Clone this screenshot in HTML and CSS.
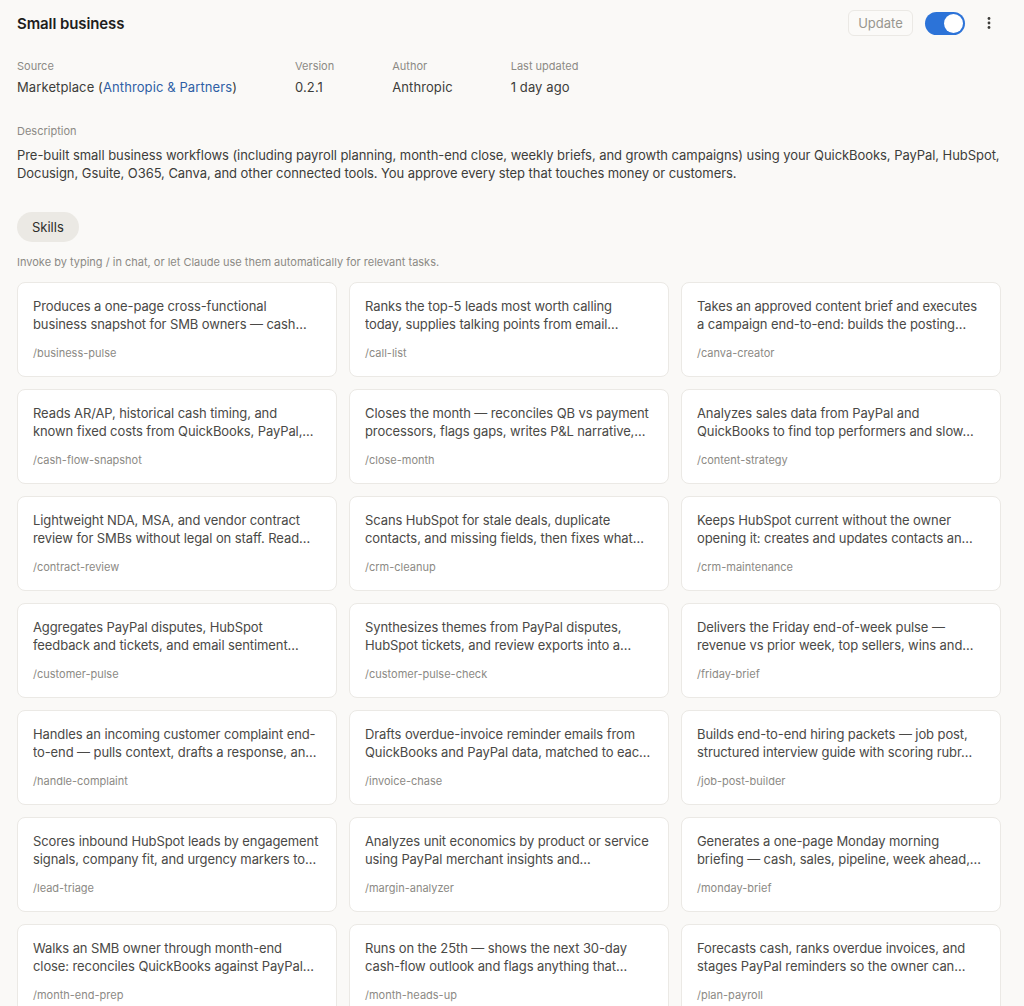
FILE: index.html
```html
<!DOCTYPE html>
<html>
<head>
<meta charset="utf-8">
<link rel="stylesheet" href="styles.css">
</head>
<body>
<div class="page">
  <header class="top">
    <h1 class="title">Small business</h1>
    <div class="actions">
      <button class="update">Update</button>
      <span class="toggle"><span class="knob"></span></span>
      <svg class="kebab" width="16" height="16" viewBox="0 0 16 16"><circle cx="8" cy="3.5" r="1.4" fill="#3d3d3a"/><circle cx="8" cy="8" r="1.4" fill="#3d3d3a"/><circle cx="8" cy="12.5" r="1.4" fill="#3d3d3a"/></svg>
    </div>
  </header>

  <div class="meta">
    <div class="field"><div class="label">Source</div><div class="value">Marketplace (<a class="link">Anthropic &amp; Partners</a>)</div></div>
    <div class="field"><div class="label">Version</div><div class="value">0.2.1</div></div>
    <div class="field"><div class="label">Author</div><div class="value">Anthropic</div></div>
    <div class="field"><div class="label">Last updated</div><div class="value">1 day ago</div></div>
  </div>

  <div class="desc">
    <div class="label">Description</div>
    <p class="desc-text">Pre-built small business workflows (including payroll planning, month-end close, weekly briefs, and growth campaigns) using your QuickBooks, PayPal, HubSpot, Docusign, Gsuite, O365, Canva, and other connected tools. You approve every step that touches money or customers.</p>
  </div>

  <div class="tabs"><span class="pill">Skills</span></div>
  <p class="hint">Invoke by typing / in chat, or let Claude use them automatically for relevant tasks.</p>

  <div class="grid">
    <div class="card"><p class="cdesc"><span class="ln">Produces a one-page cross-functional</span><span class="ln">business snapshot for SMB owners — cash…</span></p><div class="slug">/business-pulse</div></div>
    <div class="card"><p class="cdesc"><span class="ln">Ranks the top-5 leads most worth calling</span><span class="ln">today, supplies talking points from email…</span></p><div class="slug">/call-list</div></div>
    <div class="card"><p class="cdesc"><span class="ln">Takes an approved content brief and executes</span><span class="ln">a campaign end-to-end: builds the posting…</span></p><div class="slug">/canva-creator</div></div>

    <div class="card"><p class="cdesc"><span class="ln">Reads AR/AP, historical cash timing, and</span><span class="ln">known fixed costs from QuickBooks, PayPal,…</span></p><div class="slug">/cash-flow-snapshot</div></div>
    <div class="card"><p class="cdesc"><span class="ln">Closes the month — reconciles QB vs payment</span><span class="ln">processors, flags gaps, writes P&amp;L narrative,…</span></p><div class="slug">/close-month</div></div>
    <div class="card"><p class="cdesc"><span class="ln">Analyzes sales data from PayPal and</span><span class="ln">QuickBooks to find top performers and slow…</span></p><div class="slug">/content-strategy</div></div>

    <div class="card"><p class="cdesc"><span class="ln">Lightweight NDA, MSA, and vendor contract</span><span class="ln">review for SMBs without legal on staff. Read…</span></p><div class="slug">/contract-review</div></div>
    <div class="card"><p class="cdesc"><span class="ln">Scans HubSpot for stale deals, duplicate</span><span class="ln">contacts, and missing fields, then fixes what…</span></p><div class="slug">/crm-cleanup</div></div>
    <div class="card"><p class="cdesc"><span class="ln">Keeps HubSpot current without the owner</span><span class="ln">opening it: creates and updates contacts an…</span></p><div class="slug">/crm-maintenance</div></div>

    <div class="card"><p class="cdesc"><span class="ln">Aggregates PayPal disputes, HubSpot</span><span class="ln">feedback and tickets, and email sentiment…</span></p><div class="slug">/customer-pulse</div></div>
    <div class="card"><p class="cdesc"><span class="ln">Synthesizes themes from PayPal disputes,</span><span class="ln">HubSpot tickets, and review exports into a…</span></p><div class="slug">/customer-pulse-check</div></div>
    <div class="card"><p class="cdesc"><span class="ln">Delivers the Friday end-of-week pulse —</span><span class="ln">revenue vs prior week, top sellers, wins and…</span></p><div class="slug">/friday-brief</div></div>

    <div class="card"><p class="cdesc"><span class="ln">Handles an incoming customer complaint end-</span><span class="ln">to-end — pulls context, drafts a response, an…</span></p><div class="slug">/handle-complaint</div></div>
    <div class="card"><p class="cdesc"><span class="ln">Drafts overdue-invoice reminder emails from</span><span class="ln">QuickBooks and PayPal data, matched to eac…</span></p><div class="slug">/invoice-chase</div></div>
    <div class="card"><p class="cdesc"><span class="ln">Builds end-to-end hiring packets — job post,</span><span class="ln">structured interview guide with scoring rubr…</span></p><div class="slug">/job-post-builder</div></div>

    <div class="card"><p class="cdesc"><span class="ln">Scores inbound HubSpot leads by engagement</span><span class="ln">signals, company fit, and urgency markers to…</span></p><div class="slug">/lead-triage</div></div>
    <div class="card"><p class="cdesc"><span class="ln">Analyzes unit economics by product or service</span><span class="ln">using PayPal merchant insights and…</span></p><div class="slug">/margin-analyzer</div></div>
    <div class="card"><p class="cdesc"><span class="ln">Generates a one-page Monday morning</span><span class="ln">briefing — cash, sales, pipeline, week ahead,…</span></p><div class="slug">/monday-brief</div></div>

    <div class="card"><p class="cdesc"><span class="ln">Walks an SMB owner through month-end</span><span class="ln">close: reconciles QuickBooks against PayPal…</span></p><div class="slug">/month-end-prep</div></div>
    <div class="card"><p class="cdesc"><span class="ln">Runs on the 25th — shows the next 30-day</span><span class="ln">cash-flow outlook and flags anything that…</span></p><div class="slug">/month-heads-up</div></div>
    <div class="card"><p class="cdesc"><span class="ln">Forecasts cash, ranks overdue invoices, and</span><span class="ln">stages PayPal reminders so the owner can…</span></p><div class="slug">/plan-payroll</div></div>
  </div>
</div>
</body>
</html>
```

FILE: styles.css
```css
* { box-sizing: border-box; }
html, body { margin: 0; padding: 0; }
body {
  background: #faf9f7;
  font-family: Inter, "Noto Sans", "Liberation Sans", sans-serif;
  color: #3d3d3a;
  -webkit-font-smoothing: antialiased;
}
.page { padding: 0 23px 0 17px; }
.top {
  display: flex;
  align-items: center;
  justify-content: space-between;
  height: 46px;
}
.title {
  margin: 0;
  font-size: 15px;
  font-weight: 600;
  color: #1f1e1d;
  letter-spacing: -0.1px;
}
.actions { display: flex; align-items: center; margin-right: 4px; }
.update {
  font-family: inherit;
  font-size: 13px;
  color: #98968f;
  background: #fbfaf8;
  border: 1px solid #ebe9e5;
  border-radius: 6px;
  height: 26px;
  width: 65px;
  padding: 0;
  margin-right: 12px;
}
.toggle {
  display: flex;
  align-items: center;
  justify-content: flex-end;
  width: 40px;
  height: 23px;
  border-radius: 12px;
  background: #2c73d8;
  padding: 2px;
  margin-right: 16px;
}
.knob {
  width: 19px;
  height: 19px;
  border-radius: 50%;
  background: #fff;
}
.kebab { display: block; }

.meta {
  display: flex;
  gap: 58px;
  margin-top: 12px;
}
.label {
  font-size: 11px;
  color: #8c8a85;
  line-height: 16px;
}
.value {
  font-size: 13px;
  line-height: 18px;
  margin-top: 4px;
  color: #3d3d3a;
  letter-spacing: 0.1px;
}
.link { color: #2f5fa5; }

.desc { margin-top: 27px; }
.desc-text {
  margin: 7px 0 0;
  font-size: 13px;
  line-height: 18px;
  color: #3d3d3a;
  letter-spacing: -0.06px;
}
.tabs { margin-top: 30px; display: flex; }
.pill {
  display: inline-flex;
  align-items: center;
  height: 30px;
  padding: 0 15px;
  border-radius: 15px;
  background: #ebe9e4;
  font-size: 13px;
  color: #2e2d2b;
}
.hint {
  margin: 12px 0 0;
  font-size: 11px;
  line-height: 16px;
  color: #8c8a85;
}
.grid {
  margin-top: 12px;
  display: grid;
  grid-template-columns: repeat(3, 320px);
  gap: 12px;
}
.card {
  background: #fff;
  border-radius: 8px;
  border: 1px solid #ebe9e5;
  height: 95px;
  padding: 14px 13px 0 15px;
}
.cdesc {
  margin: 0;
  font-size: 13px;
  line-height: 18px;
  color: #4a4946;
  letter-spacing: -0.1px;
}
.ln {
  display: block;
  white-space: nowrap;
  overflow: hidden;
  text-overflow: ellipsis;
}
.slug {
  margin-top: 12px;
  font-size: 11px;
  line-height: 16px;
  color: #8c8a85;
}
```
